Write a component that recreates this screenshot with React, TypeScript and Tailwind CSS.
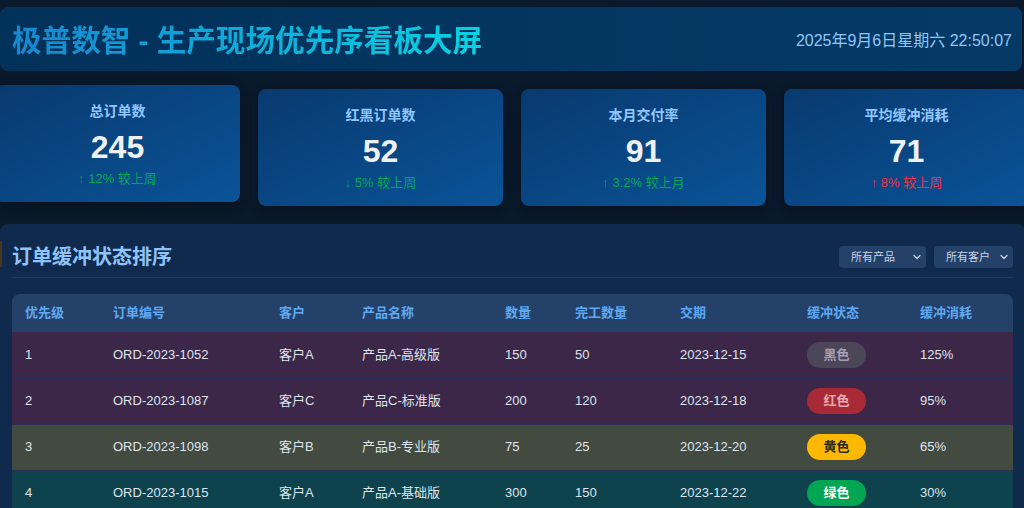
import { ChevronDown } from 'lucide-react';

interface Stat {
  title: string;
  value: string;
  trend: string;
  up: boolean;
  good: boolean;
}

const STATS: Stat[] = [
  { title: '总订单数', value: '245', trend: '12% 较上周', up: true, good: true },
  { title: '红黑订单数', value: '52', trend: '5% 较上周', up: false, good: true },
  { title: '本月交付率', value: '91', trend: '3.2% 较上月', up: true, good: true },
  { title: '平均缓冲消耗', value: '71', trend: '8% 较上周', up: true, good: false },
];

type Buffer = 'black' | 'red' | 'yellow' | 'green';

interface Order {
  priority: number;
  id: string;
  customer: string;
  product: string;
  qty: number;
  done: number;
  due: string;
  buffer: Buffer;
  usage: string;
}

const ORDERS: Order[] = [
  { priority: 1, id: 'ORD-2023-1052', customer: '客户A', product: '产品A-高级版', qty: 150, done: 50, due: '2023-12-15', buffer: 'black', usage: '125%' },
  { priority: 2, id: 'ORD-2023-1087', customer: '客户C', product: '产品C-标准版', qty: 200, done: 120, due: '2023-12-18', buffer: 'red', usage: '95%' },
  { priority: 3, id: 'ORD-2023-1098', customer: '客户B', product: '产品B-专业版', qty: 75, done: 25, due: '2023-12-20', buffer: 'yellow', usage: '65%' },
  { priority: 4, id: 'ORD-2023-1015', customer: '客户A', product: '产品A-基础版', qty: 300, done: 150, due: '2023-12-22', buffer: 'green', usage: '30%' },
];

const ROW_BG: Record<Buffer, string> = {
  black: 'bg-[#3d2749]',
  red: 'bg-[#3d2749]',
  yellow: 'bg-[#434a40]',
  green: 'bg-[#0e434e]',
};

const BADGE: Record<Buffer, { label: string; cls: string }> = {
  black: { label: '黑色', cls: 'bg-[#4c4659] text-[#a89fb3]' },
  red: { label: '红色', cls: 'bg-[#a82a36] text-[#e6a7ad]' },
  yellow: { label: '黄色', cls: 'bg-[#ffb800] text-[#2a2a1e]' },
  green: { label: '绿色', cls: 'bg-[#00a652] text-white' },
};

const COLUMNS = [
  { label: '优先级', w: 'w-[88px]' },
  { label: '订单编号', w: 'w-[166px]' },
  { label: '客户', w: 'w-[83px]' },
  { label: '产品名称', w: 'w-[143px]' },
  { label: '数量', w: 'w-[70px]' },
  { label: '完工数量', w: 'w-[105px]' },
  { label: '交期', w: 'w-[127px]' },
  { label: '缓冲状态', w: 'w-[113px]' },
  { label: '缓冲消耗', w: 'w-[106px]' },
];

function StatCard({ stat, lifted }: { stat: Stat; lifted?: boolean }) {
  return (
    <div
      className={`rounded-lg bg-linear-to-br from-[#083a6f] to-[#0a5398] px-4 pt-4 pb-[14px] text-center shadow-[0_4px_12px_rgba(0,0,0,0.3)] ${
        lifted ? '-translate-y-1' : ''
      }`}
    >
      <div className="text-[14px] leading-5 font-bold text-[#92c6ff]">{stat.title}</div>
      <div className="mt-[7px] text-[32px] leading-[38px] font-bold text-[#eef1f5]">{stat.value}</div>
      <div
        className={`mt-1 text-[13px] leading-[18px] ${stat.good ? 'text-[#00a854]' : 'text-[#f5313f]'}`}
      >
        {stat.up ? '↑' : '↓'} {stat.trend}
      </div>
    </div>
  );
}

function FilterSelect({ label, width }: { label: string; width: string }) {
  return (
    <div
      className={`flex h-[22px] items-center justify-between rounded bg-[#24416a] pl-3 pr-[3px] text-[11px] text-[#c9d5e3] ${width}`}
    >
      <span>{label}</span>
      <ChevronDown size={12} strokeWidth={2.5} className="text-[#c9d5e3]" />
    </div>
  );
}

export default function App() {
  return (
    <div className="h-[508px] w-[1024px] overflow-hidden bg-[#0a192b] pt-[7px] font-[Liberation_Sans,Noto_Sans_CJK_SC,sans-serif]">
      {/* Header */}
      <header className="flex h-16 w-[1022px] items-center justify-between rounded-lg bg-linear-to-r from-[#02315a] to-[#053a67] pt-[3px] pr-[10px] pl-3">
        <h1 className="bg-linear-to-r from-[#1787cf] to-[#08d2e2] bg-clip-text text-[29.6px] leading-10 font-bold text-transparent">
          极普数智 - 生产现场优先序看板大屏
        </h1>
        <div className="text-[16px] text-[#92c5f8]">2025年9月6日星期六 22:50:07</div>
      </header>

      {/* Stat cards */}
      <div className="mt-[18px] -ml-[5px] grid w-[1034px] grid-cols-4 gap-[18px]">
        {STATS.map((s, i) => (
          <StatCard key={s.title} stat={s} lifted={i === 0} />
        ))}
      </div>

      {/* Order panel */}
      <section className="mt-[18px] h-[300px] w-[1025px] rounded-lg bg-[#0f2a4c] px-3 pt-[19px]">
        <div className="relative flex items-center justify-between border-b border-[#1d3a5f] pb-[6px]">
          <span className="absolute top-[-2px] left-[-12px] h-[26px] w-[2px] bg-[#4a3520]" />
          <h2 className="text-[20px] leading-7 font-bold text-[#8fc4fb]">订单缓冲状态排序</h2>
          <div className="flex gap-2">
            <FilterSelect label="所有产品" width="w-[87px]" />
            <FilterSelect label="所有客户" width="w-[79px]" />
          </div>
        </div>

        <div className="mt-4 overflow-hidden rounded-t-lg">
          <table className="w-[1001px] table-fixed border-collapse text-left">
            <thead>
              <tr className="bg-[#24416a]">
                {COLUMNS.map((c) => (
                  <th
                    key={c.label}
                    className={`h-[38px] pl-[13px] text-[13px] font-bold text-[#5ea9f2] ${c.w}`}
                  >
                    {c.label}
                  </th>
                ))}
              </tr>
            </thead>
            <tbody className="text-[13px] text-[#dfe5ee]">
              {ORDERS.map((o) => {
                const badge = BADGE[o.buffer];
                return (
                  <tr key={o.id} className={`border-b border-[#2a2f55] ${ROW_BG[o.buffer]}`}>
                    <td className="h-[46px] pl-[13px]">{o.priority}</td>
                    <td className="pl-[13px]">{o.id}</td>
                    <td className="pl-[13px]">{o.customer}</td>
                    <td className="pl-[13px]">{o.product}</td>
                    <td className="pl-[13px]">{o.qty}</td>
                    <td className="pl-[13px]">{o.done}</td>
                    <td className="pl-[13px]">{o.due}</td>
                    <td className="pl-[13px]">
                      <span
                        className={`inline-flex h-[26px] w-[59px] items-center justify-center rounded-full text-[13px] font-bold ${badge.cls}`}
                      >
                        {badge.label}
                      </span>
                    </td>
                    <td className="pl-[13px]">{o.usage}</td>
                  </tr>
                );
              })}
            </tbody>
          </table>
        </div>
      </section>
    </div>
  );
}
